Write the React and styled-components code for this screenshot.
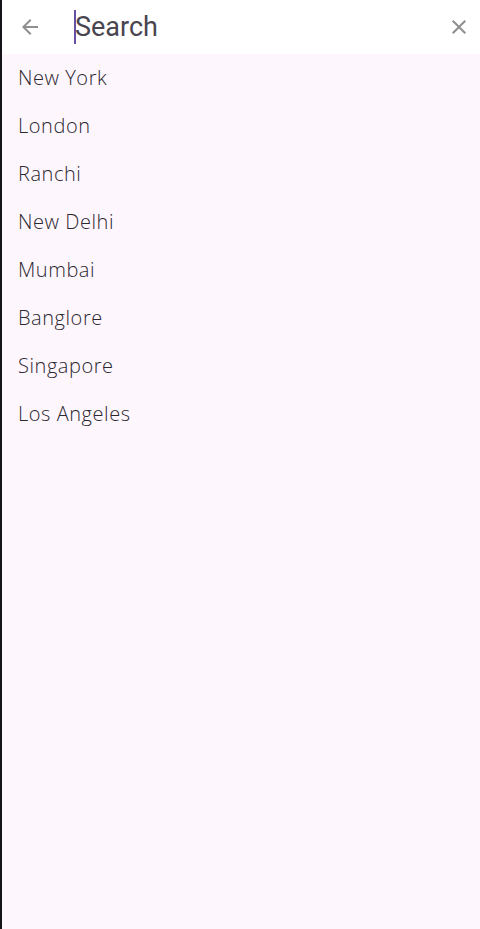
import styled, { createGlobalStyle } from 'styled-components';

const cities = [
  'New York',
  'London',
  'Ranchi',
  'New Delhi',
  'Mumbai',
  'Banglore',
  'Singapore',
  'Los Angeles',
];

const GlobalStyle = createGlobalStyle`
  html, body {
    margin: 0;
    padding: 0;
    background: #141216;
  }
  #root {
    height: 929px;
  }
`;

export default function App() {
  return (
    <>
      <GlobalStyle />
      <Screen>
        <EdgeStrip />
        <Panel>
          <SearchBar>
            <IconButton aria-label="back">
              <svg width="24" height="24" viewBox="0 0 24 24">
                <path
                  d="M20 11H7.83l5.59-5.59L12 4l-8 8 8 8 1.41-1.41L7.83 13H20v-2z"
                  fill="#8f8f8f"
                />
              </svg>
            </IconButton>
            <SearchInput>
              <Caret />
              Search
            </SearchInput>
            <IconButton aria-label="clear">
              <svg width="24" height="24" viewBox="0 0 24 24">
                <path
                  d="M19 6.41L17.59 5 12 10.59 6.41 5 5 6.41 10.59 12 5 17.59 6.41 19 12 13.41 17.59 19 19 17.59 13.41 12z"
                  fill="#8f8f8f"
                />
              </svg>
            </IconButton>
          </SearchBar>
          <List>
            {cities.map((c) => (
              <Item key={c}>{c}</Item>
            ))}
          </List>
        </Panel>
      </Screen>
    </>
  );
}

const Screen = styled.div`
  display: flex;
  width: 480px;
  height: 929px;
`;

const EdgeStrip = styled.div`
  width: 2px;
  flex-shrink: 0;
  background: #151317;
`;

const Panel = styled.div`
  flex: 1;
  display: flex;
  flex-direction: column;
  background: #fdf6fd;
`;

const SearchBar = styled.div`
  height: 54px;
  display: flex;
  align-items: center;
  background: #ffffff;
  padding: 0 1px 0 8px;
`;

const IconButton = styled.div`
  width: 40px;
  height: 40px;
  display: flex;
  align-items: center;
  justify-content: center;
`;

const SearchInput = styled.div`
  flex: 1;
  display: flex;
  align-items: center;
  margin-left: 24px;
  font-family: Roboto, 'Liberation Sans', sans-serif;
  font-size: 27px;
  color: #49454f;
  height: 36px;
`;

const Caret = styled.span`
  width: 2px;
  height: 34px;
  background: #6750a4;
  margin-right: -1px;
`;

const List = styled.div`
  display: flex;
  flex-direction: column;
`;

const Item = styled.div`
  height: 48px;
  box-sizing: border-box;
  padding: 0 0 2px 16px;
  display: flex;
  align-items: center;
  font-family: 'Open Sans', 'DejaVu Sans', sans-serif;
  font-weight: 300;
  font-size: 20px;
  letter-spacing: 0.55px;
  color: #2c2830;
`;
